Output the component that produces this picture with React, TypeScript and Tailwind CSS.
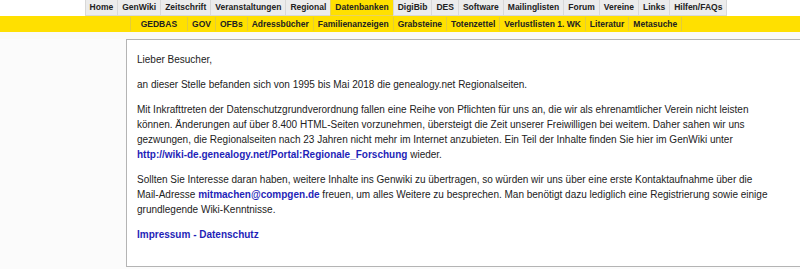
const topNav = [
  { label: "Home" },
  { label: "GenWiki" },
  { label: "Zeitschrift" },
  { label: "Veranstaltungen" },
  { label: "Regional" },
  { label: "Datenbanken", active: true },
  { label: "DigiBib" },
  { label: "DES" },
  { label: "Software" },
  { label: "Mailinglisten" },
  { label: "Forum" },
  { label: "Vereine" },
  { label: "Links" },
  { label: "Hilfen/FAQs" },
];

const subNav = [
  "GEDBAS",
  "GOV",
  "OFBs",
  "Adressbücher",
  "Familienanzeigen",
  "Grabsteine",
  "Totenzettel",
  "Verlustlisten 1. WK",
  "Literatur",
  "Metasuche",
];

const linkClass = "font-bold text-[#1f1fb8] no-underline";

export default function App() {
  return (
    <div className="w-[800px] h-[269px] overflow-hidden bg-[#fbfbfb] text-[#222] font-['Liberation_Sans',Arial,sans-serif]">
      {/* Hauptnavigation */}
      <div className="flex justify-center pl-[12px] h-[16px] bg-white">
        {topNav.map((item) => (
          <a
            key={item.label}
            className={
              "h-[16px] px-[4px] flex items-center text-[8.5px] font-bold border border-t-0 border-r-0 last:border-r " +
              (item.active ? "bg-[#ffe000] border-[#e8d260] text-[#222]" : "bg-[#ececec] border-[#d8d8d8] text-[#222]")
            }
          >
            {item.label}
          </a>
        ))}
      </div>

      {/* Unternavigation */}
      <div className="flex justify-center pl-[12px] h-[16px] bg-[#ffe000] pt-[1px]">
        {subNav.map((label, i) => (
          <a
            key={label}
            className={
              "h-[14px] flex items-center text-[8.5px] font-bold text-[#222] border-l border-[#e3cc3a] last:border-r " +
              (i === 0 ? "px-[10px]" : "px-[4px]")
            }
          >
            {label}
          </a>
        ))}
      </div>

      <div className="h-[7px] bg-[#fafaf6]" />

      {/* Inhalt */}
      <div className="pl-[126px]">
        <div className="bg-white border border-r-0 border-[#b4b4b4] h-[228px] pt-[12px] pl-[10px] text-[10px] leading-[15px]">
          <div className="w-[645px]">
            <p className="mb-[10px]">Lieber Besucher,</p>
            <p className="mb-[10px]">an dieser Stelle befanden sich von 1995 bis Mai 2018 die genealogy.net Regionalseiten.</p>
            <p className="mb-[10px]">
              Mit Inkrafttreten der Datenschutzgrundverordnung fallen eine Reihe von Pflichten für uns an, die wir als ehrenamtlicher Verein nicht leisten können. Änderungen auf über 8.400 HTML-Seiten vorzunehmen, übersteigt die Zeit unserer Freiwilligen bei weitem. Daher sahen wir uns gezwungen, die Regionalseiten nach 23 Jahren nicht mehr im Internet anzubieten. Ein Teil der Inhalte finden Sie hier im GenWiki unter{" "}
              <a className={linkClass} href="#">http://wiki-de.genealogy.net/Portal:Regionale_Forschung</a> wieder.
            </p>
            <p className="mb-[10px]">
              Sollten Sie Interesse daran haben, weitere Inhalte ins Genwiki zu übertragen, so würden wir uns über eine erste Kontaktaufnahme über die{" "}
              <span className="whitespace-nowrap">Mail-Adresse</span>{" "}
              <a className={linkClass} href="#">mitmachen@compgen.de</a> freuen, um alles Weitere zu besprechen. Man benötigt dazu lediglich eine Registrierung sowie einige grundlegende Wiki-Kenntnisse.
            </p>
            <p>
              <a className={linkClass} href="#">Impressum - Datenschutz</a>
            </p>
          </div>
        </div>
      </div>
    </div>
  );
}
